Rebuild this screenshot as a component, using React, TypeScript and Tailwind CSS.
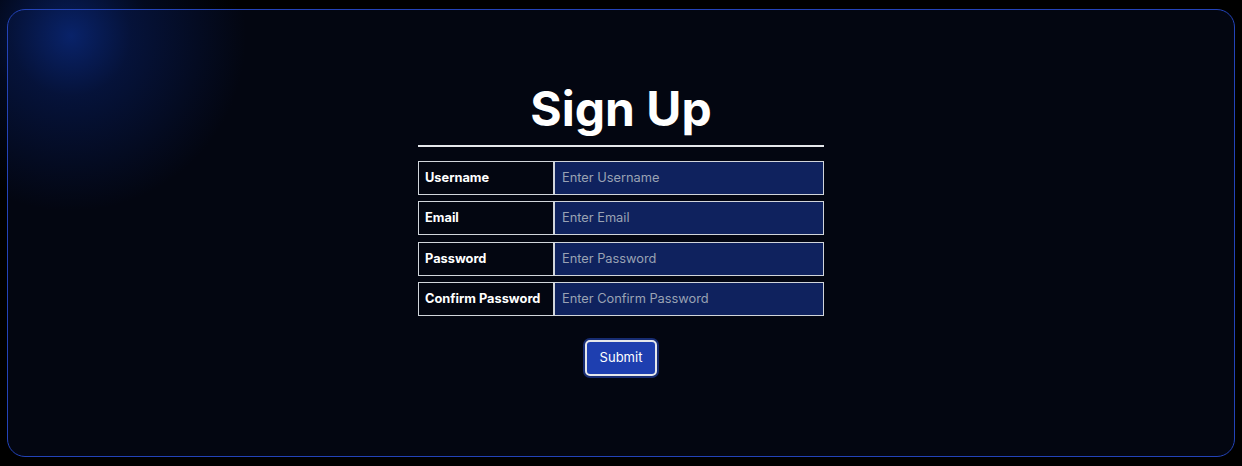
import React from 'react'

const fields = [
  { label: 'Username', placeholder: 'Enter Username', type: 'text' },
  { label: 'Email', placeholder: 'Enter Email', type: 'email' },
  { label: 'Password', placeholder: 'Enter Password', type: 'password' },
  { label: 'Confirm Password', placeholder: 'Enter Confirm Password', type: 'password' },
]

export default function App() {
  return (
    <div
      className="relative h-[466px] w-full overflow-hidden bg-black bg-[radial-gradient(circle_at_70px_35px,rgba(8,34,105,0.9)_0%,rgba(5,20,65,0.45)_80px,rgba(0,0,0,0)_170px)] px-[7px] py-[9px]"
      style={{ fontFamily: 'Inter, "Noto Sans", sans-serif' }}
    >
      <div className="relative flex h-full w-full flex-col items-center justify-center rounded-[18px] border border-[#2343b8] bg-[#030611] bg-[radial-gradient(circle_at_63px_26px,rgba(9,36,110,0.95)_0%,rgba(7,27,85,0.6)_60px,rgba(3,6,17,0)_175px)] pb-[6px]">
        <h1 className="text-[48px] font-bold leading-[48px] text-white">Sign Up</h1>
        <div className="mt-[12px] h-[2px] w-[406px] bg-[#e5e7eb]" />

        <form className="mt-[14px] flex w-[406px] flex-col gap-[6.5px]" onSubmit={(e) => e.preventDefault()}>
          {fields.map((f) => (
            <div key={f.label} className="flex h-[34px]">
              <label className="flex w-[136px] items-center border border-[#d1d5db] bg-[#030611] px-[6px] text-[12.8px] font-bold text-white">
                {f.label}
              </label>
              <input
                type={f.type}
                placeholder={f.placeholder}
                className="flex-1 border border-[#d1d5db] bg-[#0f225e] px-[7px] text-[12.8px] text-white outline-none placeholder:text-[#9aa2b4]"
              />
            </div>
          ))}
          <div className="mt-[17px] flex justify-center">
            <button
              type="submit"
              className="h-[36px] w-[72px] rounded-[5px] border-2 border-[#e5e7eb] bg-[#1e3fb0] text-[13px] text-white shadow-[0_0_0_2px_rgba(37,70,180,0.6)]"
            >
              Submit
            </button>
          </div>
        </form>
      </div>
    </div>
  )
}
